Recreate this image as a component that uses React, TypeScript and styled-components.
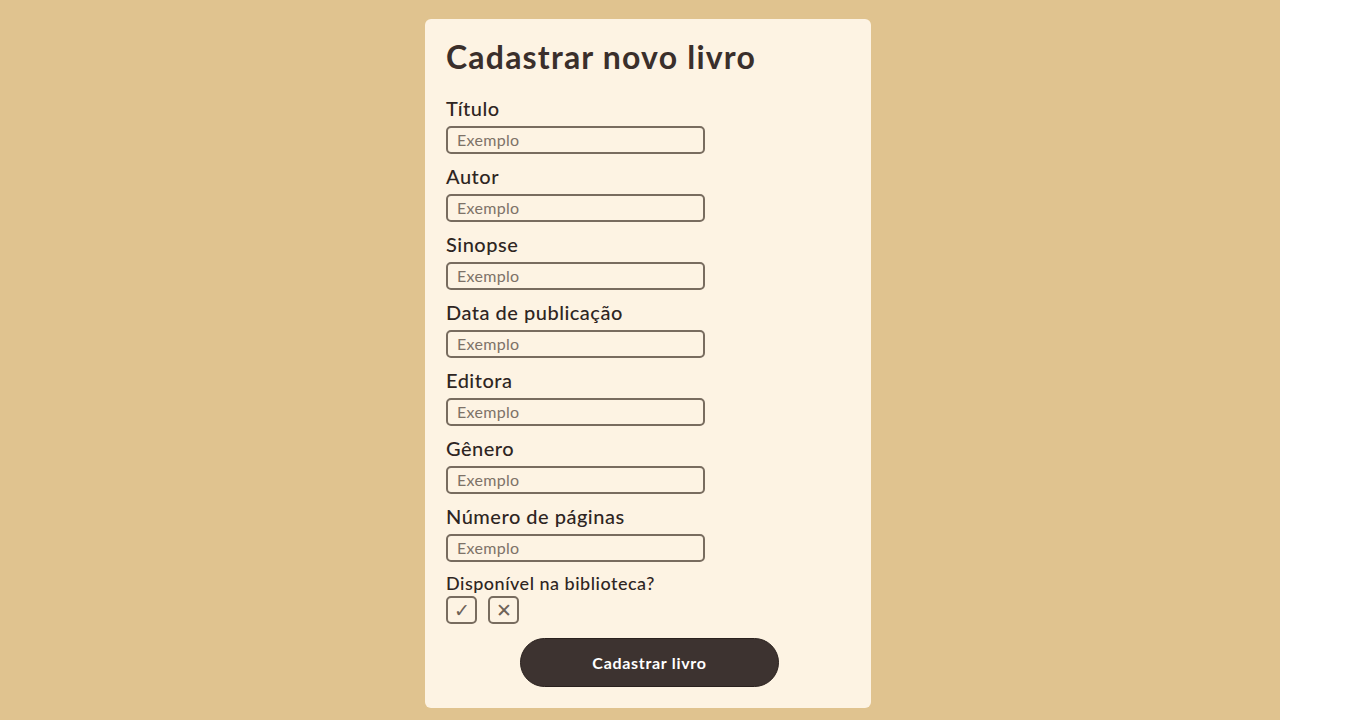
import React from "react";
import styled, { createGlobalStyle } from "styled-components";

const GlobalStyle = createGlobalStyle`
  html, body { margin: 0; padding: 0; background: #ffffff; }
  * { box-sizing: border-box; }
`;

const Page = styled.div`
  width: 1280px;
  min-height: 720px;
  background: #e0c38f;
  display: flex;
  justify-content: center;
  align-items: flex-start;
  padding: 19px 0 12px 16px;
  font-family: "Lato", "Noto Sans", sans-serif;
  color: #2e2522;
`;

const Card = styled.form`
  width: 446px;
  background: #fdf3e3;
  border-radius: 6px;
  padding: 20px 18px 21px 21px;
  display: flex;
  flex-direction: column;
`;

const Title = styled.h1`
  margin: 0 0 21px;
  font-size: 32px;
  line-height: 36px;
  font-weight: 700;
  letter-spacing: 1.2px;
  color: #3a2f2b;
`;

const Field = styled.div`
  display: flex;
  flex-direction: column;
  align-items: flex-start;
  margin-bottom: 10px;
`;

const Label = styled.label<{ $small?: boolean }>`
  font-size: ${(p) => (p.$small ? "18px" : "20px")};
  line-height: ${(p) => (p.$small ? "22px" : "24px")};
  font-weight: 500;
  letter-spacing: 0.5px;
  color: #2e2522;
  margin-bottom: ${(p) => (p.$small ? "2px" : "6px")};
`;

const Input = styled.input`
  width: 259px;
  height: 28px;
  border: 2px solid #786c5f;
  border-radius: 5px;
  background: transparent;
  padding: 0 9px 1px;
  font-family: inherit;
  font-size: 16px;
  letter-spacing: 0.3px;
  color: #2e2522;
  outline: none;
  &::placeholder { color: #7d7268; }
`;

const ChoiceRow = styled.div`
  display: flex;
  gap: 11px;
`;

const Choice = styled.button`
  width: 31px;
  height: 28px;
  border: 2px solid #786c5f;
  border-radius: 5px;
  background: transparent;
  color: #6e6257;
  font-size: 19px;
  font-weight: 300;
  line-height: 1;
  padding: 0;
  display: flex;
  align-items: center;
  justify-content: center;
  font-family: "DejaVu Sans", sans-serif;
`;

const Submit = styled.button`
  align-self: center;
  width: 259px;
  height: 49px;
  margin-top: 4px;
  border: 1px solid #2a211e;
  border-radius: 25px;
  background: #3d3330;
  color: #ffffff;
  font-family: inherit;
  font-size: 16px;
  font-weight: 700;
  letter-spacing: 0.7px;
`;

const fields = [
  "Título",
  "Autor",
  "Sinopse",
  "Data de publicação",
  "Editora",
  "Gênero",
  "Número de páginas",
];

export default function App() {
  return (
    <>
      <GlobalStyle />
      <Page>
        <Card onSubmit={(e) => e.preventDefault()}>
          <Title>Cadastrar novo livro</Title>
          {fields.map((f) => (
            <Field key={f}>
              <Label>{f}</Label>
              <Input placeholder="Exemplo" />
            </Field>
          ))}
          <Field>
            <Label $small>Disponível na biblioteca?</Label>
            <ChoiceRow>
              <Choice type="button">✓</Choice>
              <Choice type="button">✕</Choice>
            </ChoiceRow>
          </Field>
          <Submit type="submit">Cadastrar livro</Submit>
        </Card>
      </Page>
    </>
  );
}
